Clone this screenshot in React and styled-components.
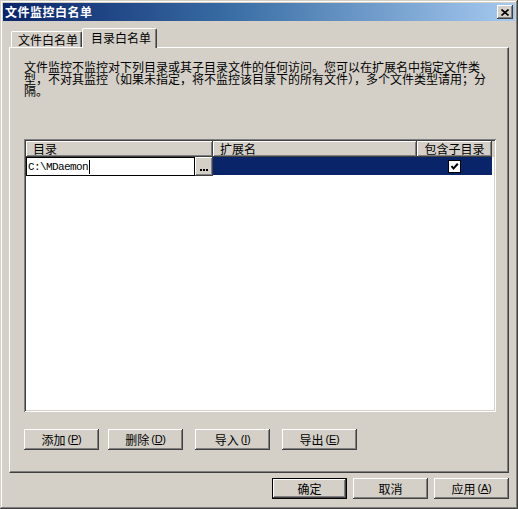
import React from "react";
import styled, { createGlobalStyle, css } from "styled-components";

const GlobalStyle = createGlobalStyle`
  html, body { margin: 0; padding: 0; background: #d4d0c8; }
  body { font-family: "Noto Sans CJK SC", "DejaVu Sans", sans-serif; font-size: 12px; color: #000; }
  * { box-sizing: border-box; }
`;

const raised = css`
  background: #d4d0c8;
  box-shadow: inset -1px -1px #404040, inset 1px 1px #ffffff,
    inset -2px -2px #808080, inset 2px 2px #d4d0c8;
`;

const Window = styled.div`
  width: 518px;
  height: 509px;
  padding: 3px;
  background: #d4d0c8;
  box-shadow: inset -1px -1px #404040, inset 1px 1px #d4d0c8,
    inset -2px -2px #808080, inset 2px 2px #ffffff;
  display: flex;
  flex-direction: column;
`;

const TitleBar = styled.div`
  height: 18px;
  display: flex;
  align-items: center;
  justify-content: space-between;
  padding: 0 2px 0 2px;
  background: linear-gradient(to right, #0a246a 0%, #3a6ea5 45%, #a6caf0 100%);
`;

const TitleText = styled.span`
  color: #fff;
  font-weight: bold;
  font-size: 12px;
  line-height: 18px;
  letter-spacing: 0.5px;
`;

const CloseButton = styled.div`
  ${raised};
  width: 16px;
  height: 14px;
  display: flex;
  align-items: center;
  justify-content: center;
`;

const Body = styled.div`
  flex: 1;
  display: flex;
  flex-direction: column;
  padding: 7px 6px 0 6px;
`;

const TabRow = styled.div`
  display: flex;
  align-items: flex-end;
  height: 19px;
  padding-left: 2px;
`;

const Tab = styled.div`
  position: relative;
  height: ${(p) => (p.$active ? "20px" : "16px")};
  width: ${(p) => (p.$active ? "75px" : "71px")};
  margin-bottom: ${(p) => (p.$active ? "-1px" : "0")};
  z-index: ${(p) => (p.$active ? 1 : 0)};
  padding-left: ${(p) => (p.$active ? "8px" : "6px")};
  line-height: ${(p) => (p.$active ? "17px" : "16px")};
  background: #d4d0c8;
  border-top: 1px solid #ffffff;
  border-left: 1px solid #ffffff;
  border-right: 1px solid #404040;
  border-radius: 2px 2px 0 0;
  box-shadow: inset -1px 0 #808080;
  font-size: 12px;
  white-space: nowrap;
`;

const Panel = styled.div`
  height: 426px;
  border-top: 1px solid #ffffff;
  border-left: 1px solid #ffffff;
  border-right: 1px solid #404040;
  border-bottom: 1px solid #404040;
  box-shadow: inset -1px -1px #808080;
  padding: 13px 12px 21px 14px;
  display: flex;
  flex-direction: column;
`;

const Description = styled.div`
  font-size: 12px;
  line-height: 12px;
  white-space: nowrap;
`;

const Line = styled.div`
  height: 12px;
`;

const ListBox = styled.div`
  margin-top: 42px;
  height: 273px;
  padding: 2px;
  background: #ffffff;
  box-shadow: inset 1px 1px #808080, inset -1px -1px #ffffff,
    inset 2px 2px #404040, inset -2px -2px #d4d0c8;
  display: flex;
  flex-direction: column;
`;

const Header = styled.div`
  display: flex;
  height: 16px;
  background: #d4d0c8;
`;

const HeaderCell = styled.div`
  width: ${(p) => p.$w}px;
  height: 16px;
  ${raised};
  font-size: 12px;
  line-height: 16px;
  padding-left: ${(p) => (p.$center ? "0" : "7px")};
  text-align: ${(p) => (p.$center ? "center" : "left")};
  white-space: nowrap;
  overflow: hidden;
`;

const Row = styled.div`
  display: flex;
  height: 18px;
`;

const EditField = styled.div`
  width: 169px;
  height: 19px;
  background: #fff;
  border: 1px solid #000;
  padding-left: 1px;
  font-family: "Liberation Mono", "DejaVu Sans Mono", monospace;
  font-size: 11px;
  letter-spacing: -0.6px;
  line-height: 16px;
  display: flex;
  align-items: center;
`;

const Caret = styled.span`
  display: inline-block;
  width: 1px;
  height: 14px;
  background: #000;
  margin-left: 1px;
`;

const EllipsisButton = styled.div`
  ${raised};
  width: 18px;
  height: 19px;
  display: flex;
  align-items: flex-end;
  justify-content: center;
  gap: 1px;
  padding-bottom: 5px;
`;

const Dot = styled.span`
  width: 2px;
  height: 2px;
  background: #000;
`;

const SelectedCell = styled.div`
  width: ${(p) => p.$w}px;
  height: 18px;
  background: #0a246a;
  display: flex;
  align-items: center;
  justify-content: center;
`;

const CheckBox = styled.div`
  width: 13px;
  height: 13px;
  background: #fff;
  border: 1px solid #000;
  display: flex;
  align-items: center;
  justify-content: center;
`;

const ButtonRow = styled.div`
  display: flex;
  margin-top: 17px;
`;

const Button = styled.div`
  ${raised};
  width: 75px;
  height: 21px;
  margin-left: ${(p) => p.$ml || 0}px;
  display: flex;
  align-items: center;
  justify-content: center;
  font-size: 12px;
  line-height: 21px;
  white-space: nowrap;
  ${(p) =>
    p.$default &&
    css`
      box-shadow: inset 0 0 0 1px #000000, inset -2px -2px #404040,
        inset 2px 2px #ffffff, inset -3px -3px #808080, inset 3px 3px #d4d0c8;
    `}
`;

const Accel = styled.span`
  font-family: "Liberation Sans", sans-serif;
  font-size: 11px;
  margin-left: 2px;
  letter-spacing: -0.3px;
`;

const Under = styled.span`
  text-decoration: underline;
`;

const FooterRow = styled.div`
  display: flex;
  justify-content: flex-end;
  gap: 6px;
  margin-top: 5px;
`;

const Label = ({ text, k }) => (
  <>
    {text}
    {k && (
      <Accel>
        (<Under>{k}</Under>)
      </Accel>
    )}
  </>
);

export default function App() {
  return (
    <>
      <GlobalStyle />
      <Window>
        <TitleBar>
          <TitleText>文件监控白名单</TitleText>
          <CloseButton>
            <svg width="8" height="7" viewBox="0 0 8 7">
              <path d="M0.5 0.5 L7.5 6.5 M7.5 0.5 L0.5 6.5" stroke="#000" strokeWidth="1.6" />
            </svg>
          </CloseButton>
        </TitleBar>
        <Body>
          <TabRow>
            <Tab>文件白名单</Tab>
            <Tab $active>目录白名单</Tab>
          </TabRow>
          <Panel>
            <Description>
              <Line>文件监控不监控对下列目录或其子目录文件的任何访问。您可以在扩展名中指定文件类</Line>
              <Line>型，不对其监控（如果未指定，将不监控该目录下的所有文件），多个文件类型请用；分</Line>
              <Line>隔。</Line>
            </Description>
            <ListBox>
              <Header>
                <HeaderCell $w={187}>目录</HeaderCell>
                <HeaderCell $w={204}>扩展名</HeaderCell>
                <HeaderCell $w={75} $center>包含子目录</HeaderCell>
              </Header>
              <Row>
                <EditField>
                  C:\MDaemon
                  <Caret />
                </EditField>
                <EllipsisButton>
                  <Dot />
                  <Dot />
                  <Dot />
                </EllipsisButton>
                <SelectedCell $w={204} />
                <SelectedCell $w={75}>
                  <CheckBox>
                    <svg width="9" height="9" viewBox="0 0 9 9">
                      <path d="M1.5 4 L3.5 6.5 L7.8 1.8" stroke="#000" strokeWidth="2" fill="none" />
                    </svg>
                  </CheckBox>
                </SelectedCell>
              </Row>
            </ListBox>
            <ButtonRow>
              <Button><Label text="添加" k="P" /></Button>
              <Button $ml={9}><Label text="删除" k="D" /></Button>
              <Button $ml={12}><Label text="导入" k="I" /></Button>
              <Button $ml={12}><Label text="导出" k="E" /></Button>
            </ButtonRow>
          </Panel>
          <FooterRow>
            <Button $default>确定</Button>
            <Button>取消</Button>
            <Button><Label text="应用" k="A" /></Button>
          </FooterRow>
        </Body>
      </Window>
    </>
  );
}
